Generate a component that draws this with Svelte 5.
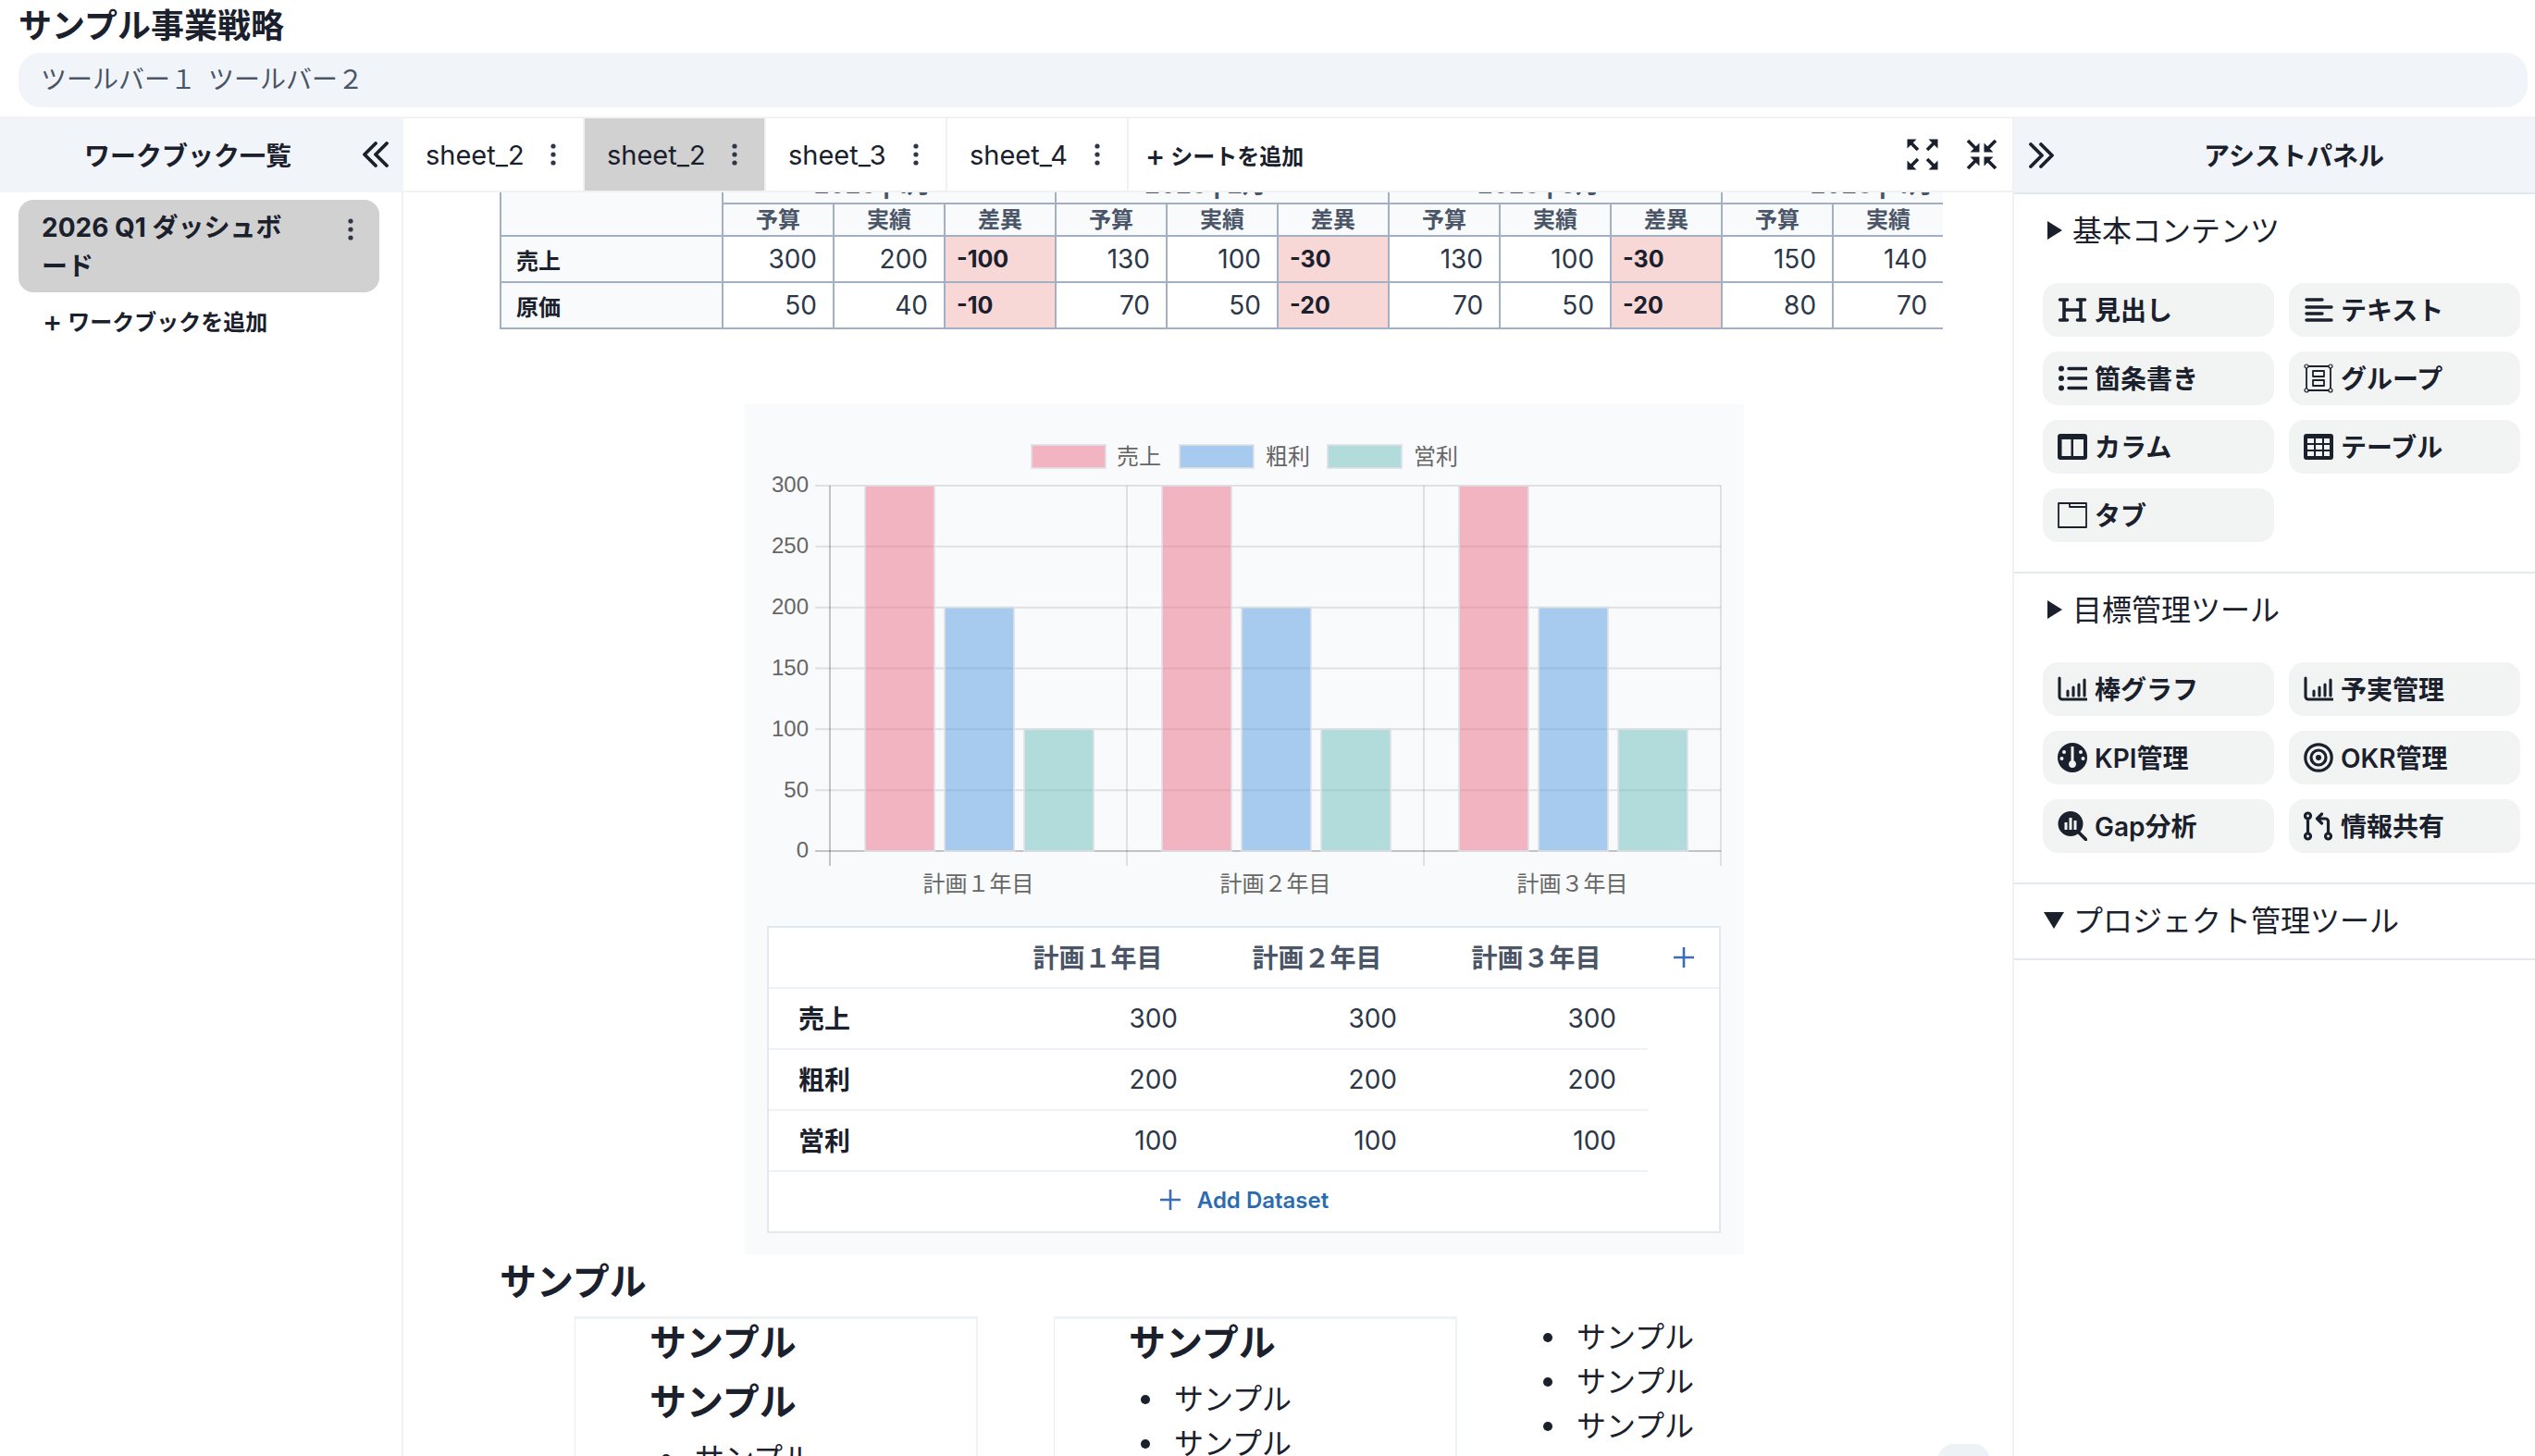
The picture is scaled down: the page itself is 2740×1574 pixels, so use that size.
<script>
  const periods = [
    { label: '2026 | 1月', span: 3 },
    { label: '2026 | 2月', span: 3 },
    { label: '2026 | 3月', span: 3 },
    { label: '2026 | 4月', span: 3 }
  ];
  const subHeads = periods.flatMap(() => ['予算', '実績', '差異']);
  const sheetRows = [
    { name: '売上', cells: [300, 200, -100, 130, 100, -30, 130, 100, -30, 150, 140, -10] },
    { name: '原価', cells: [50, 40, -10, 70, 50, -20, 70, 50, -20, 80, 70, -10] }
  ];
  const tabs = [
    { name: 'sheet_2', active: false },
    { name: 'sheet_2', active: true },
    { name: 'sheet_3', active: false },
    { name: 'sheet_4', active: false }
  ];

  const plot = { left: 92, right: 1055, top: 88, bottom: 483, group: 321 };
  const ticks = [300, 250, 200, 150, 100, 50, 0];
  const yOf = (v) => plot.bottom - ((plot.bottom - plot.top) * v) / 300;
  const series = [
    { name: '売上', value: 300, offset: 38, fill: 'rgba(237,110,138,.5)', sw: 310, lx: 402 },
    { name: '粗利', value: 200, offset: 124, fill: 'rgba(84,156,228,.5)', sw: 470, lx: 563 },
    { name: '営利', value: 100, offset: 210, fill: 'rgba(108,190,190,.5)', sw: 630, lx: 723 }
  ];
  const years = ['計画１年目', '計画２年目', '計画３年目'];

  const icons = {
    heading: { s: 'M7 5v22M25 5v22M7 16h18M2.5 5h8M21.5 5h8M2.5 27h8M21.5 27h8', w: 3.6 },
    text: { s: 'M3 5h17M3 13h27M3 20h17M3 27h27', w: 3.4 },
    list: { s: 'M12 5.5h20M12 16h20M12 26.5h20', w: 3.4, f: 'M7 5.5a3 3 0 1 1-6 0a3 3 0 1 1 6 0zM7 16a3 3 0 1 1-6 0a3 3 0 1 1 6 0zM7 26.5a3 3 0 1 1-6 0a3 3 0 1 1 6 0z' },
    group: { s: 'M3 3h26v26H3zM10 8h12v6H10zM10 18h12v6H10z', w: 1.8, dots: [[3, 3], [29, 3], [3, 29], [29, 29]] },
    column: { f: 'M3 2h26a3 3 0 0 1 3 3v22a3 3 0 0 1-3 3H3a3 3 0 0 1-3-3V5a3 3 0 0 1 3-3zM4.5 8v18h10V8zM17 8v18h11V8z' },
    table: { f: 'M3 2h26a3 3 0 0 1 3 3v22a3 3 0 0 1-3 3H3a3 3 0 0 1-3-3V5a3 3 0 0 1 3-3zM4 7v5h7V7zM13 7v5h7V7zM22 7v5h6V7zM4 14v5h7v-5zM13 14v5h7v-5zM22 14v5h6v-5zM4 21v5h7v-5zM13 21v5h7v-5zM22 21v5h6v-5z' },
    tab: { s: 'M1 3h12v4h18v22H1zM13 7h18M13 3h18v4', w: 1.8 },
    bars: { s: 'M2 4v20a3 3 0 0 0 3 3h26M11 18v5M17 14v9M23 11v12M29 6v17', w: 3.1 },
    gauge: { f: 'M16 0a16 16 0 1 1 0 32a16 16 0 1 1 0-32zM14.5 4v15.3a4 4 0 1 0 3 0V4zM7 8a2 2 0 1 0 0 4a2 2 0 1 0 0-4zM25 8a2 2 0 1 0 0 4a2 2 0 1 0 0-4zM4.5 15a2 2 0 1 0 0 4a2 2 0 1 0 0-4zM27.5 15a2 2 0 1 0 0 4a2 2 0 1 0 0-4z' },
    target: { s: 'M16 1.8a14.2 14.2 0 1 1 0 28.4a14.2 14.2 0 1 1 0-28.4zM16 8a8 8 0 1 1 0 16a8 8 0 1 1 0-16z', w: 3.2, f: 'M16 13a3 3 0 1 1 0 6a3 3 0 1 1 0-6z' },
    gap: { f: 'M14 0a13.5 13.5 0 1 1 0 27a13.5 13.5 0 1 1 0-27zM7.5 12v8h3v-8zM12.5 7v13h3V7zM17.5 10v10h3V10z', s: 'M23 23l8 8', w: 3.6 },
    share: { s: 'M4.5 2a3 3 0 1 1 0 6a3 3 0 1 1 0-6zM4.5 24a3 3 0 1 1 0 6a3 3 0 1 1 0-6zM26.5 24a3 3 0 1 1 0 6a3 3 0 1 1 0-6zM4.5 8v16M26.5 24V11a3 3 0 0 0-3-3H15M19.5 3L14.5 8L19.5 13', w: 3.2 }
  };

  const basic = [
    { icon: 'heading', label: '見出し' },
    { icon: 'text', label: 'テキスト' },
    { icon: 'list', label: '箇条書き' },
    { icon: 'group', label: 'グループ' },
    { icon: 'column', label: 'カラム' },
    { icon: 'table', label: 'テーブル' },
    { icon: 'tab', label: 'タブ' }
  ];
  const goals = [
    { icon: 'bars', label: '棒グラフ' },
    { icon: 'bars', label: '予実管理' },
    { icon: 'gauge', label: 'KPI管理' },
    { icon: 'target', label: 'OKR管理' },
    { icon: 'gap', label: 'Gap分析' },
    { icon: 'share', label: '情報共有' }
  ];
  const sections = [
    { title: '基本コンテンツ', items: basic },
    { title: '目標管理ツール', items: goals }
  ];
</script>

{#snippet dots()}
  <svg class="dots" viewBox="0 0 6 24" width="6" height="24" aria-hidden="true">
    <circle cx="3" cy="3" r="2.6" /><circle cx="3" cy="12" r="2.6" /><circle cx="3" cy="21" r="2.6" />
  </svg>
{/snippet}

{#snippet toolIcon(name)}
  {@const ic = icons[name]}
  <svg class="tool-icon" viewBox="0 0 32 32" width="32" height="32" aria-hidden="true">
    {#if ic.f}<path class="ifill" d={ic.f} fill-rule="evenodd" />{/if}
    {#if ic.s}<path class="istroke" d={ic.s} stroke-width={ic.w} />{/if}
    {#if ic.dots}
      {#each ic.dots as [cx, cy]}<circle class="handle" {cx} {cy} r="2" />{/each}
    {/if}
  </svg>
{/snippet}

<div class="page">
  <header class="top">
    <h1>サンプル事業戦略</h1>
    <div class="toolbar"><span>ツールバー１</span><span>ツールバー２</span></div>
  </header>

  <div class="body">
    <aside class="left">
      <div class="left-head">
        <span class="left-title">ワークブック一覧</span>
        <svg class="chev-l" viewBox="0 0 30 28" width="30" height="28" aria-hidden="true">
          <path d="M15 2L3 14L15 26M27 2L15 14L27 26" />
        </svg>
      </div>
      <div class="book">
        <span class="book-name">2026 Q1 ダッシュボード</span>
        {@render dots()}
      </div>
      <div class="add-book"><span class="plus-mark">+</span>ワークブックを追加</div>
    </aside>

    <main class="main">
      <nav class="tabs">
        {#each tabs as tab}
          <div class="tab" class:active={tab.active}>
            <span>{tab.name}</span>
            {@render dots()}
          </div>
        {/each}
        <div class="add-sheet"><span class="plus-mark">+</span>シートを追加</div>
        <div class="view-icons">
          <svg viewBox="0 0 34 34" width="34" height="34" aria-hidden="true">
            <path class="arrow" d="M4 4l8 8M30 4l-8 8M4 30l8-8M30 30l-8-8" />
            <path d="M0.5 0.5h10l-10 10zM33.5 0.5h-10l10 10zM0.5 33.5h10l-10-10zM33.5 33.5h-10l10-10z" />
          </svg>
          <svg viewBox="0 0 34 34" width="34" height="34" aria-hidden="true">
            <path class="arrow" d="M2 2l8 8M32 2l-8 8M2 32l8-8M32 32l-8-8" />
            <path d="M14.5 14.5v-10l-10 10zM19.5 14.5v-10l10 10zM14.5 19.5v10l-10-10zM19.5 19.5v10l10-10z" />
          </svg>
        </div>
      </nav>

      <div class="content">
        <div class="sheet-wrap">
          <table class="sheet">
            <colgroup>
              <col class="c-name" />
              {#each subHeads as _}<col class="c-val" />{/each}
            </colgroup>
            <thead>
              <tr class="r-period">
                <th rowspan="2"></th>
                {#each periods as p}<th colspan={p.span} class="period">{p.label}</th>{/each}
              </tr>
              <tr class="r-sub">
                {#each subHeads as h}<th>{h}</th>{/each}
              </tr>
            </thead>
            <tbody>
              {#each sheetRows as row}
                <tr class="r-data">
                  <th class="name">{row.name}</th>
                  {#each row.cells as v}
                    <td class:neg={v < 0}>{v}</td>
                  {/each}
                </tr>
              {/each}
            </tbody>
          </table>
        </div>

        <section class="chart-card">
          <svg class="chart" viewBox="0 0 1080 564" width="1080" height="564" role="img" aria-label="グラフ">
            {#each series as s}
              <rect x={s.sw} y="44" width="80" height="25" fill={s.fill} class="bar" />
              <text class="tick" x={s.lx} y="65">{s.name}</text>
            {/each}
            {#each ticks as t}
              <line class={t === 0 ? 'axis' : 'grid'} x1="76" x2={plot.right} y1={yOf(t)} y2={yOf(t)} />
              <text class="tick" x="69" y={yOf(t) + 1} text-anchor="end" dominant-baseline="middle">{t}</text>
            {/each}
            {#each [0, 1, 2, 3] as i}
              <line class={i === 0 ? 'axis-v' : 'grid'} x1={plot.left + i * plot.group} x2={plot.left + i * plot.group} y1={plot.top} y2="499" />
            {/each}
            {#each years as year, i}
              {#each series as s}
                <rect class="bar" x={plot.left + i * plot.group + s.offset} y={yOf(s.value)} width="75" height={plot.bottom - yOf(s.value)} fill={s.fill} />
              {/each}
              <text class="tick" x={plot.left + i * plot.group + plot.group / 2} y="527" text-anchor="middle">{year}</text>
            {/each}
          </svg>

          <table class="data">
            <colgroup>
              <col class="d-name" />
              <col class="d-val" /><col class="d-val" /><col class="d-val" />
              <col class="d-add" />
            </colgroup>
            <thead>
              <tr>
                <th></th>
                {#each years as y}<th class="year">{y}</th>{/each}
                <th class="plus-cell">
                  <svg class="plus" viewBox="0 0 24 24" width="24" height="24" aria-hidden="true"><path d="M12 1v22M1 12h22" /></svg>
                </th>
              </tr>
            </thead>
            <tbody>
              {#each series as s}
                <tr>
                  <th class="row-name">{s.name}</th>
                  {#each years as _}<td>{s.value}</td>{/each}
                </tr>
              {/each}
              <tr>
                <td colspan="5" class="add-row">
                  <span class="add-data">
                    <svg class="plus" viewBox="0 0 24 24" width="24" height="24" aria-hidden="true"><path d="M12 1v22M1 12h22" /></svg>
                    Add Dataset
                  </span>
                </td>
              </tr>
            </tbody>
          </table>
        </section>

        <h2>サンプル</h2>
        <div class="cols">
          <div class="col card">
            <h3>サンプル</h3>
            <h3>サンプル</h3>
            <ul><li>サンプル</li><li>サンプル</li></ul>
          </div>
          <div class="col card">
            <h3>サンプル</h3>
            <ul><li>サンプル</li><li>サンプル</li></ul>
          </div>
          <div class="col plain">
            <ul><li>サンプル</li><li>サンプル</li><li>サンプル</li></ul>
          </div>
        </div>
        <div class="scroll-chip"></div>
      </div>
    </main>

    <aside class="right">
      <div class="right-head">
        <svg class="chev-r" viewBox="0 0 28 28" width="28" height="28" aria-hidden="true">
          <path d="M3 2L15 14L3 26M14 2L26 14L14 26" />
        </svg>
        <span class="right-title">アシストパネル</span>
      </div>
      {#each sections as sec}
        <section class="panel-sec">
          <div class="sec-title">
            <svg viewBox="0 0 16 20" width="16" height="20" aria-hidden="true"><path d="M0 0L16 10L0 20z" /></svg>
            <span class="sec-text">{sec.title}</span>
          </div>
          <div class="tools">
            {#each sec.items as item}
              <div class="tool">
                {@render toolIcon(item.icon)}
                <span class="tool-label">{item.label}</span>
              </div>
            {/each}
          </div>
        </section>
      {/each}
      <section class="panel-sec last">
        <div class="sec-title open">
          <svg viewBox="0 0 22 18" width="22" height="18" aria-hidden="true"><path d="M0 0H22L11 18z" /></svg>
          <span class="sec-text">プロジェクト管理ツール</span>
        </div>
      </section>
    </aside>
  </div>
</div>

<style>
  :global(body) {
    margin: 0;
    background: #fff;
  }
  .page {
    width: 2740px;
    height: 1574px;
    overflow: hidden;
    display: flex;
    flex-direction: column;
    color: #1a202c;
    font-family: Inter, "Noto Sans CJK JP", sans-serif;
  }
  .top {
    height: 126px;
    padding: 0 8px 0 20px;
    box-sizing: border-box;
    flex: none;
  }
  h1 {
    margin: 0;
    height: 57px;
    font-size: 36px;
    line-height: 57px;
    font-weight: 700;
  }
  .toolbar {
    height: 59px;
    box-sizing: border-box;
    padding: 0 0 6px 24px;
    border-radius: 24px;
    background: #f1f5f9;
    display: flex;
    align-items: center;
    gap: 13px;
    font-size: 28px;
    font-weight: 400;
    color: #4a5568;
  }
  .body {
    flex: 1;
    min-height: 0;
    display: flex;
    border-top: 2px solid #f1f1f1;
  }

  .left {
    width: 436px;
    flex: none;
    box-sizing: border-box;
    border-right: 2px solid #f1f1f1;
  }
  .left-head {
    height: 80px;
    box-sizing: border-box;
    padding: 0 15px 3px 91px;
    margin-right: -2px;
    background: #f1f5f9;
    display: flex;
    align-items: center;
    justify-content: space-between;
  }
  .left-title {
    font-size: 28px;
    font-weight: 600;
  }
  .chev-l path,
  .chev-r path {
    fill: none;
    stroke: #1a202c;
    stroke-width: 3.8;
    stroke-linecap: round;
    stroke-linejoin: round;
  }
  .book {
    margin: 8px 24px 0 20px;
    height: 100px;
    box-sizing: border-box;
    border-radius: 16px;
    background: #d1d1d1;
    padding: 9px 28px 0 25px;
    display: flex;
    justify-content: space-between;
    gap: 64px;
  }
  .book .dots {
    margin-top: 11px;
    flex: none;
  }
  .book-name {
    font-size: 28px;
    line-height: 42px;
    font-weight: 700;
  }
  .add-book {
    margin: 16px 0 0 46px;
    font-size: 24px;
    line-height: 34px;
    font-weight: 600;
  }
  .plus-mark {
    font-size: 32px;
    line-height: 24px;
    font-weight: 500;
    margin-right: 6px;
    vertical-align: -2px;
  }
  .dots circle {
    fill: #2d3748;
  }

  .main {
    flex: 1;
    min-width: 0;
    display: flex;
    flex-direction: column;
    position: relative;
  }
  .tabs {
    height: 80px;
    flex: none;
    box-sizing: border-box;
    display: flex;
    align-items: stretch;
    border-bottom: 2px solid #f1f1f1;
    position: relative;
    z-index: 1;
    background: #fff;
  }
  .tab {
    width: 196px;
    box-sizing: border-box;
    border-right: 2px solid #f1f1f1;
    padding: 0 29px 0 24px;
    display: flex;
    align-items: center;
    justify-content: space-between;
    font-size: 29px;
  }
  .tab.active {
    background: #d1d1d1;
  }
  .add-sheet {
    margin-left: 18px;
    align-self: center;
    font-size: 24px;
    font-weight: 600;
  }
  .view-icons {
    margin-left: auto;
    margin-right: 16px;
    display: flex;
    align-items: center;
    gap: 30px;
  }
  .view-icons path {
    fill: #1a202c;
  }
  .view-icons path.arrow {
    fill: none;
    stroke: #1a202c;
    stroke-width: 3.6;
  }

  .content {
    flex: 1;
    min-height: 0;
    overflow: hidden;
    padding-left: 104px;
  }
  .sheet-wrap {
    width: 1560px;
    margin-top: -32px;
    overflow: hidden;
  }
  .sheet {
    width: 1680px;
    table-layout: fixed;
    border-collapse: collapse;
  }
  .c-name {
    width: 240px;
  }
  .c-val {
    width: 120px;
  }
  .sheet th,
  .sheet td {
    border: 2px solid #a3afc2;
    padding: 0;
    box-sizing: border-box;
  }
  .sheet thead th {
    background: #f8fafc;
    color: #4a5568;
    font-size: 24px;
    font-weight: 600;
    line-height: 30px;
  }
  .r-period {
    height: 43px;
  }
  .sheet thead th.period {
    font-size: 26px;
    font-weight: 700;
    padding: 3px 36px 0 0;
    text-align: center;
  }
  .r-sub {
    height: 35px;
  }
  .r-data {
    height: 50px;
  }
  .sheet tbody th.name {
    background: #f8fafc;
    text-align: left;
    padding-left: 16px;
    font-size: 24px;
    font-weight: 600;
  }
  .sheet td {
    text-align: right;
    padding-right: 17px;
    font-size: 28px;
    color: #2d3748;
  }
  .sheet td.neg {
    background: #f8d7d7;
    text-align: left;
    padding: 0 0 0 12px;
    font-size: 25px;
    font-weight: 700;
    color: #1a202c;
  }

  .chart-card {
    width: 1080px;
    height: 919px;
    margin: 81px 0 0 265px;
    box-sizing: border-box;
    background: #f9fafb;
  }
  .chart {
    display: block;
  }
  .chart .grid {
    stroke: rgba(0, 0, 0, 0.1);
    stroke-width: 2;
  }
  .chart .axis,
  .chart .axis-v {
    stroke: rgba(0, 0, 0, 0.22);
    stroke-width: 2;
  }
  .chart .bar {
    stroke: rgba(222, 225, 229, 0.85);
    stroke-width: 2;
  }
  .chart .tick {
    fill: #666;
    font-size: 24px;
    font-family: "Liberation Sans", "Noto Sans CJK JP", sans-serif;
  }

  .data {
    width: 1031px;
    margin-left: 24px;
    table-layout: fixed;
    border-collapse: separate;
    border-spacing: 0;
    border: 2px solid #e2e8f0;
    background: #fff;
  }
  .d-name {
    width: 239px;
  }
  .d-val {
    width: 237px;
  }
  .data th,
  .data td {
    padding: 0;
    height: 66px;
    box-sizing: border-box;
    border-bottom: 2px solid #edf2f7;
  }
  .data td {
    text-align: right;
    padding-right: 34px;
    font-size: 28px;
    color: #2d3748;
  }
  .data .year {
    font-size: 28px;
    font-weight: 600;
    color: #4a5568;
    padding: 0 4px 2px 0;
  }
  .data .row-name {
    text-align: left;
    padding: 0 0 2px 32px;
    font-size: 28px;
    font-weight: 600;
  }
  .plus-cell {
    text-align: center;
  }
  .plus {
    display: inline-block;
    vertical-align: middle;
  }
  .plus path {
    fill: none;
    stroke: #3b6cb4;
    stroke-width: 2.6;
  }
  .data td.add-row {
    border-bottom: 0;
    height: 64px;
    padding: 0;
    text-align: center;
  }
  .add-data {
    display: inline-flex;
    align-items: center;
    gap: 17px;
    font-size: 24px;
    font-weight: 600;
    color: #2b6cb0;
  }

  h2 {
    margin: 2px 0 9px;
    height: 56px;
    font-size: 40px;
    line-height: 56px;
    font-weight: 700;
  }
  .cols {
    display: flex;
    gap: 82px;
    padding-left: 81px;
    align-items: flex-start;
  }
  .col {
    width: 436px;
    box-sizing: border-box;
    flex: none;
  }
  .card {
    height: 400px;
    border-top: 3px solid #edf2f7;
    border-left: 1px solid #e8edf2;
    border-right: 2px solid #edf2f7;
    padding-left: 80px;
  }
  h3 {
    margin: 0 0 12px;
    height: 52px;
    font-size: 40px;
    line-height: 52px;
    font-weight: 700;
  }
  ul {
    margin: -1px 0 0;
    padding: 0 0 0 49px;
    list-style: none;
  }
  li {
    position: relative;
    font-size: 32px;
    line-height: 48px;
    font-weight: 400;
  }
  li::before {
    content: "";
    position: absolute;
    left: -36px;
    top: 19px;
    width: 10px;
    height: 10px;
    border-radius: 50%;
    background: #1a202c;
  }
  .plain ul {
    margin-top: -1px;
    padding-left: 47px;
  }
  .scroll-chip {
    position: absolute;
    left: 1659px;
    top: 1433px;
    width: 55px;
    height: 57px;
    border-radius: 16px;
    background: #edf2f7;
  }

  .right {
    width: 565px;
    flex: none;
    box-sizing: border-box;
    border-left: 2px solid #f1f1f1;
  }
  .right-head {
    height: 80px;
    background: #f1f5f9;
    border-bottom: 2px solid #e2e8f0;
    display: flex;
    align-items: center;
    padding-left: 15px;
  }
  .right-title {
    margin-left: 162px;
    margin-bottom: 2px;
    font-size: 28px;
    font-weight: 600;
  }
  .panel-sec {
    border-bottom: 2px solid #e2e8f0;
    padding: 0 16px 32px 31px;
  }
  .panel-sec.last {
    padding-bottom: 0;
    height: 82px;
    box-sizing: border-box;
  }
  .sec-title {
    height: 80px;
    display: flex;
    align-items: center;
    gap: 13px;
    padding-left: 5px;
    font-size: 32px;
    font-weight: 400;
  }
  .sec-text {
    margin: -7px 0 0 -2px;
  }
  .sec-title.open {
    padding-left: 1px;
    gap: 12px;
  }
  .sec-title svg {
    fill: #1a202c;
    flex: none;
    margin-top: -2px;
  }
  .tools {
    margin-top: 16px;
    display: grid;
    grid-template-columns: 250px 250px;
    gap: 16px;
  }
  .tool {
    height: 58px;
    border-radius: 16px;
    background: #f2f4f4;
    display: flex;
    align-items: center;
    gap: 8px;
    padding-left: 16px;
    font-size: 28px;
    font-weight: 600;
  }
  .tool-label {
    margin-top: -2px;
  }
  .tool-icon {
    flex: none;
  }
  .ifill {
    fill: #1a202c;
  }
  .istroke {
    fill: none;
    stroke: #1a202c;
    stroke-linecap: round;
    stroke-linejoin: round;
  }
  .handle {
    fill: #f2f4f4;
    stroke: #1a202c;
    stroke-width: 1.2;
  }
</style>
